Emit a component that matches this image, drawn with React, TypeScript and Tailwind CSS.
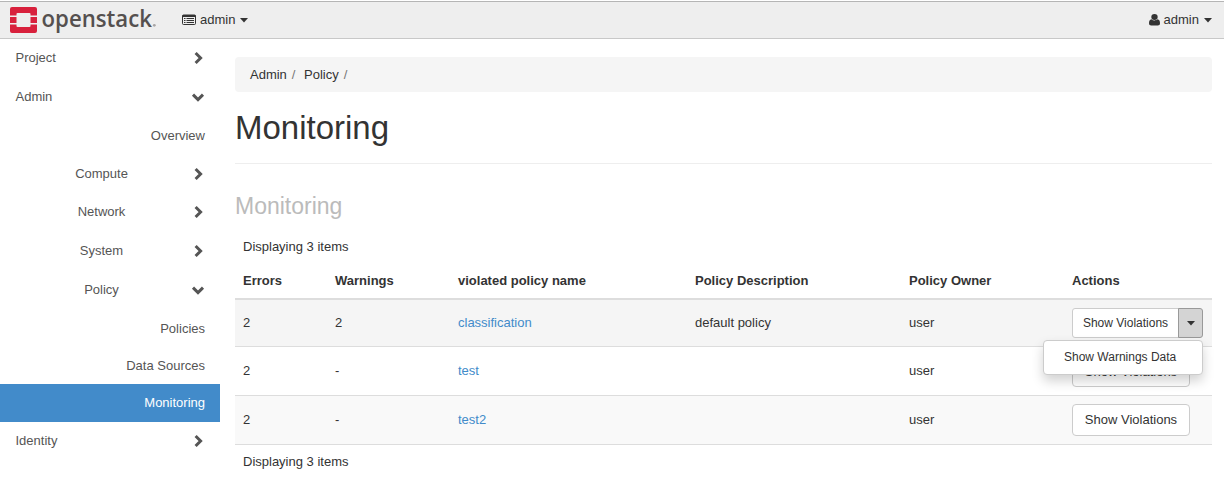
import { useState } from 'react'

type NavItem = {
  label: string
  level: 'root' | 'group' | 'leaf'
  open?: boolean
  height: string
}

type Violation = {
  name: string
  errors: string
  warnings: string
  description: string
  owner: string
}

const navItems: NavItem[] = [
  { label: 'Project', level: 'root', open: false, height: 'h-[38px]' },
  { label: 'Admin', level: 'root', open: true, height: 'h-[39px]' },
  { label: 'Overview', level: 'leaf', height: 'h-[39px]' },
  { label: 'Compute', level: 'group', open: false, height: 'h-[38px]' },
  { label: 'Network', level: 'group', open: false, height: 'h-[38px]' },
  { label: 'System', level: 'group', open: false, height: 'h-[39px]' },
  { label: 'Policy', level: 'group', open: true, height: 'h-[39px]' },
  { label: 'Policies', level: 'leaf', height: 'h-[39px]' },
  { label: 'Data Sources', level: 'leaf', height: 'h-[36px]' },
  { label: 'Monitoring', level: 'leaf', height: 'h-[38px]' },
  { label: 'Identity', level: 'root', open: false, height: 'h-[38px]' },
]

const violations: Violation[] = [
  { name: 'classification', errors: '2', warnings: '2', description: 'default policy', owner: 'user' },
  { name: 'test', errors: '2', warnings: '-', description: '', owner: 'user' },
  { name: 'test2', errors: '2', warnings: '-', description: '', owner: 'user' },
]

const columns = [
  { title: 'Errors', width: 'w-[92px]' },
  { title: 'Warnings', width: 'w-[123px]' },
  { title: 'violated policy name', width: 'w-[237px]' },
  { title: 'Policy Description', width: 'w-[214px]' },
  { title: 'Policy Owner', width: 'w-[163px]' },
  { title: 'Actions', width: 'w-[148px]' },
]

function Caret() {
  return (
    <svg width="8" height="5" viewBox="0 0 8 5" className="shrink-0" fill="currentColor">
      <path d="M0 0h8L4 4.600z" />
    </svg>
  )
}

function Chevron({ open }: { open?: boolean }) {
  return (
    <svg width="14" height="14" viewBox="0 0 14 14" fill="none" stroke="currentColor" strokeWidth="3">
      <path d={open ? 'M2 4.6L7 9.6L12 4.6' : 'M4.6 2L9.6 7L4.6 12'} />
    </svg>
  )
}

function Logo() {
  return (
    <svg width="150" height="30" viewBox="0 0 150 30" className="block overflow-visible">
      <g fill="#d8203c">
        <path d="M2 0h23a2 2 0 0 1 2 2v6.5h-6.500V7a1 1 0 0 0-1-1h-12a1 1 0 0 0-1 1v1.500H0V2a2 2 0 0 1 2-2z" />
        <path d="M0 10h6.500v6H0zM20.500 10H27v6h-6.500z" />
        <path d="M0 17.500h6.500V19a1 1 0 0 0 1 1h12a1 1 0 0 0 1-1v-1.500H27V24a2 2 0 0 1-2 2H2a2 2 0 0 1-2-2z" />
      </g>
      <text
        x="31.500"
        y="20"
        fontSize="24"
        fontWeight="600"
        textLength="110.500"
        lengthAdjust="spacingAndGlyphs"
        fill="#55504f"
        fontFamily="'Open Sans', sans-serif"
      >
        openstack
      </text>
      <circle cx="144.300" cy="18.300" r="1.400" fill="#a8a5a5" />
    </svg>
  )
}

function ListIcon() {
  return (
    <svg width="14" height="12" viewBox="0 0 14 12" fill="none" stroke="currentColor">
      <rect x="0.500" y="1" width="13" height="9.500" rx="1" />
      <path d="M0.500 2h13" strokeWidth="2" />
      <path d="M2 4.500h1.500M4.500 4.500h7.500M2 6.500h1.500M4.500 6.500h7.500M2 8.500h1.500M4.500 8.500h7.500" />
    </svg>
  )
}

function UserIcon() {
  return (
    <svg width="11" height="12" viewBox="0 0 10 12" preserveAspectRatio="none" fill="currentColor">
      <circle cx="5" cy="3" r="2.900" />
      <path d="M2.300 5.200C.6 5.400 0 7 0 9.300 0 10.800.8 11.500 2 11.500h6c1.200 0 2-.7 2-2.200 0-2.300-.6-3.900-2.300-4.100-.7.800-1.700 1.200-2.700 1.200s-2-.4-2.700-1.200z" />
    </svg>
  )
}

function Sidebar({ active, onSelect }: { active: string; onSelect: (label: string) => void }) {
  return (
    <nav className="w-[220px] shrink-0 text-[#555]">
      {navItems.map(item => (
        <button
          key={item.label}
          onClick={() => item.level === 'leaf' && onSelect(item.label)}
          className={`flex w-full items-center px-[15px] ${item.height} ${
            item.label === active ? 'bg-[#428bca] text-white' : ''
          }`}
        >
          <span
            className={
              item.level === 'leaf'
                ? 'flex-1 text-right'
                : item.level === 'group'
                  ? 'flex-1 pr-[3px] text-center'
                  : 'flex-1 pl-[0.5px] text-left'
            }
          >
            {item.label}
          </span>
          {item.level !== 'leaf' && <Chevron open={item.open} />}
        </button>
      ))}
    </nav>
  )
}

export default function App() {
  const [active, setActive] = useState('Monitoring')
  const [menuOpen, setMenuOpen] = useState(true)

  return (
    <div className="h-[503px] w-[1224px] overflow-hidden bg-white font-['Liberation_Sans',Arial,sans-serif] text-[13px] leading-[18px] text-[#333]">
      {/* Top bar */}
      <header className="h-[39px] bg-white pt-px">
        <div className="flex h-[38px] items-center border-y border-t-[#b5b5b5] border-b-[#c8c8c8] bg-[#eee] pl-[10px] pr-[12px]">
          <div className="pt-[4px]">
            <Logo />
          </div>
          <button className="ml-[22px] flex items-center">
            <ListIcon />
            <span className="ml-[4px] mr-[5px]">admin</span>
            <Caret />
          </button>
          <button className="ml-auto flex items-center">
            <UserIcon />
            <span className="ml-[4px] mr-[5px]">admin</span>
            <Caret />
          </button>
        </div>
      </header>

      <div className="flex">
        <Sidebar active={active} onSelect={setActive} />

        <main className="w-[1004px] pl-[15px] pr-[12px] pt-[18px]">
          <div className="flex h-[35px] items-center rounded bg-[#f5f5f5] px-[15px]">
            <span>Admin</span>
            <span className="ml-[5px] mr-[8.500px] text-[#777]">/</span>
            <span>Policy</span>
            <span className="ml-[5px] text-[#777]">/</span>
          </div>

          <h1 className="flex h-[72px] items-center border-b border-[#eee] text-[33px] leading-[36px]">
            Monitoring
          </h1>

          <h3 className="mt-[29px] h-[26px] text-[23px] leading-[26px] text-[#bbb]">Monitoring</h3>

          <div className="mt-[19px] px-2">Displaying 3 items</div>

          {/* Violations */}
          <table className="mt-[8px] w-[977px] table-fixed border-separate border-spacing-0 text-left">
            <thead>
              <tr>
                {columns.map(col => (
                  <th key={col.title} className={`h-[36px] border-b-2 border-[#ddd] px-2 py-0 font-bold ${col.width}`}>
                    {col.title}
                  </th>
                ))}
              </tr>
            </thead>
            <tbody>
              {violations.map((v, i) => (
                <tr
                  key={v.name}
                  className={`*:border-b *:border-[#ddd] *:px-2 *:py-0 ${
                    i === 0 ? 'h-[47px] bg-[#f5f5f5]' : i === 2 ? 'h-[49px] bg-[#f9f9f9]' : 'h-[49px]'
                  }`}
                >
                  <td>{v.errors}</td>
                  <td>{v.warnings}</td>
                  <td>
                    <a href="#" className="text-[#428bca]">{v.name}</a>
                  </td>
                  <td>{v.description}</td>
                  <td>{v.owner}</td>
                  <td>
                    {i === 0 ? (
                      <div className="relative flex h-[30px] w-[131px] text-[12px]">
                        <button className="w-[107px] rounded-l-[3px] border border-[#ccc] bg-white">
                          Show Violations
                        </button>
                        <button
                          onClick={() => setMenuOpen(!menuOpen)}
                          className="-ml-px flex w-[25px] items-center justify-center rounded-r-[3px] border border-[#999] bg-[#d4d4d4]"
                        >
                          <Caret />
                        </button>
                        {menuOpen && (
                          <div className="absolute right-0 top-[32px] z-10 flex h-[34.500px] w-[160px] items-center rounded border border-[#ccc] bg-white pb-[0.5px] pl-[20px] shadow-[0_6px_12px_rgba(0,0,0,0.18)]">
                            Show Warnings Data
                          </div>
                        )}
                      </div>
                    ) : (
                      <button className={`block h-[32px] w-[118px] rounded border border-[#ccc] bg-white ${i === 1 ? 'pt-[2px]' : ''}`}>
                        Show Violations
                      </button>
                    )}
                  </td>
                </tr>
              ))}
            </tbody>
          </table>

          <div className="mt-[8px] px-2">Displaying 3 items</div>
        </main>
      </div>
    </div>
  )
}
